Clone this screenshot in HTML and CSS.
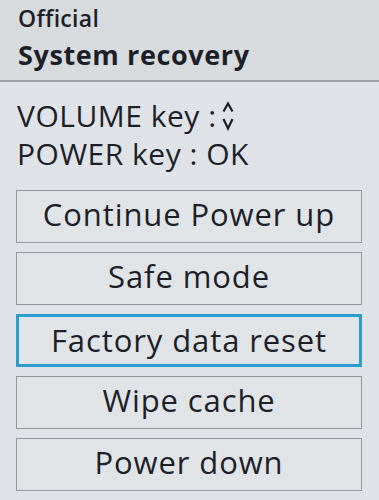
FILE: index.html
```html
<!DOCTYPE html>
<html>
<head>
<meta charset="utf-8">
<link rel="stylesheet" href="styles.css">
</head>
<body>
<div class="screen">
  <header class="header">
    <div class="brand">Official</div>
    <div class="title">System recovery</div>
  </header>
  <section class="info">
    <div class="line">VOLUME key : <svg class="updown" viewBox="0 0 12 30" width="12" height="30"><path d="M1.5 10.5 L6 2.5 L10.5 10.5" fill="none" stroke="#1c1f29" stroke-width="2.2"/><path d="M1.5 18 L6 27.5 L10.5 18" fill="none" stroke="#1c1f29" stroke-width="2.2"/></svg></div>
    <div class="line">POWER key : OK</div>
  </section>
  <nav class="menu">
    <div class="btn">Continue Power up</div>
    <div class="btn">Safe mode</div>
    <div class="btn selected">Factory data reset</div>
    <div class="btn">Wipe cache</div>
    <div class="btn">Power down</div>
  </nav>
</div>
</body>
</html>
```
FILE: styles.css
```css
html, body {
  margin: 0;
  padding: 0;
}
body {
  background: #dfe2e6;
  font-family: "Open Sans", "DejaVu Sans", sans-serif;
  color: #1c1f29;
}
.screen {
  width: 379px;
  height: 500px;
  overflow: hidden;
}
.header {
  box-sizing: border-box;
  height: 82px;
  background: #d8dbde;
  border-bottom: 2px solid #a0a3a6;
  padding: 5px 0 0 18px;
}
.brand {
  font-size: 23px;
  font-weight: 600;
  line-height: 26px;
  letter-spacing: 0.3px;
}
.title {
  font-size: 27px;
  font-weight: 700;
  line-height: 32px;
  margin-top: 8px;
  letter-spacing: 0.6px;
}
.info {
  box-sizing: border-box;
  height: 108px;
  padding: 15px 0 0 17px;
}
.line {
  font-size: 30px;
  line-height: 38px;
  letter-spacing: 0.5px;
  white-space: nowrap;
}
.updown {
  vertical-align: -4px;
  margin-left: -3px;
}
.menu {
  display: flex;
  flex-direction: column;
  gap: 9px;
  margin: 0 17px 0 16px;
}
.btn {
  box-sizing: border-box;
  height: 53px;
  border: 1.5px solid #939699;
  background: #e1e4e7;
  font-size: 31px;
  line-height: 46px;
  letter-spacing: 0.9px;
  text-align: center;
  white-space: nowrap;
}
.btn.selected {
  border: 3px solid #2b9ccb;
}
```
